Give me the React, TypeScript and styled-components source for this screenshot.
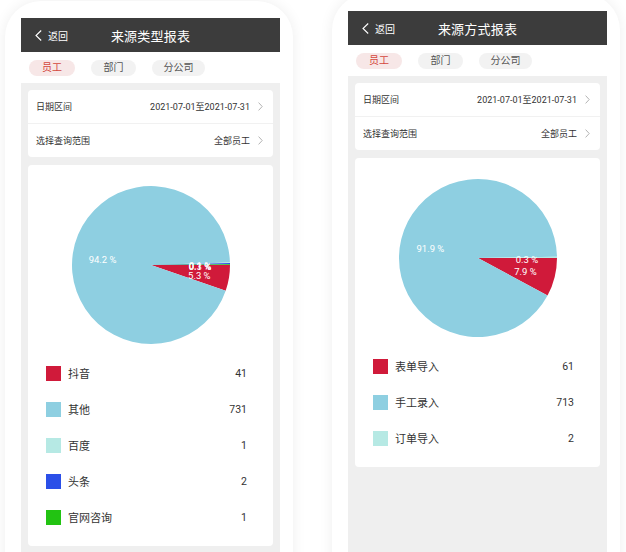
import styled, { createGlobalStyle } from "styled-components";

const GlobalStyle = createGlobalStyle`
  html, body {
    margin: 0;
    padding: 0;
    background: #ffffff;
    overflow: hidden;
  }
  body {
    font-family: Roboto, "Noto Sans CJK SC", sans-serif;
    color: #333333;
  }
`;

const Page = styled.div`
  display: flex;
  align-items: flex-start;
  gap: 39px;
  padding-left: 5px;
  height: 552px;
  overflow: hidden;
`;

const Phone = styled.div<{ $top: number }>`
  width: 259px;
  height: 620px;
  margin-top: ${(p) => p.$top}px;
  padding: 17px 13px 0 16px;
  background: #ffffff;
  border-radius: 36px 36px 0 0;
  box-shadow: 0 0 14px rgba(0, 0, 0, 0.07);
`;

const Screen = styled.div`
  display: flex;
  flex-direction: column;
  height: 100%;
  background: #efefef;
`;

const Header = styled.div`
  display: grid;
  grid-template-columns: 1fr auto 1fr;
  align-items: center;
  height: 34px;
  background: #3c3c3c;
  color: #ffffff;
`;

const Back = styled.div`
  display: flex;
  align-items: center;
  gap: 6px;
  padding-left: 14px;
  font-size: 10px;
`;

const Title = styled.div`
  font-size: 13px;
  letter-spacing: 0.2px;
`;

const Tabs = styled.div`
  display: flex;
  gap: 16px;
  height: 31px;
  padding: 8px 0 0 8px;
  box-sizing: border-box;
  background: #ffffff;
`;

const Tab = styled.div<{ $w: number; $active?: boolean }>`
  width: ${(p) => p.$w}px;
  height: 16px;
  line-height: 16px;
  text-align: center;
  border-radius: 8px;
  font-size: 10px;
  background: ${(p) => (p.$active ? "#f7e7e7" : "#f2f2f2")};
  color: ${(p) => (p.$active ? "#d4473e" : "#555555")};
`;

const Body = styled.div`
  display: flex;
  flex-direction: column;
  gap: 8px;
  padding: 7px;
`;

const Card = styled.div`
  background: #ffffff;
  border-radius: 4px;
`;

const InfoRow = styled.div`
  display: flex;
  align-items: center;
  height: 33px;
  padding: 0 10px 0 8px;
  font-size: 9px;
  color: #333333;
  & + & {
    border-top: 1px solid #f1f1f1;
  }
`;

const InfoValue = styled.span`
  margin-left: auto;
  margin-right: 8px;
`;

const ChartCard = styled(Card)`
  padding: 20px 0 11px;
`;

const PieBox = styled.div`
  display: flex;
  justify-content: center;
  margin-bottom: 10px;
`;

const LegendRow = styled.div`
  display: flex;
  align-items: center;
  height: 36px;
  padding: 0 26px 0 18px;
`;

const Swatch = styled.span<{ $color: string }>`
  width: 15px;
  height: 15px;
  background: ${(p) => p.$color};
`;

const LegendLabel = styled.span`
  margin-left: 7px;
  font-size: 11px;
  color: #333333;
`;

const LegendValue = styled.span`
  margin-left: auto;
  font-size: 10.5px;
  color: #333333;
`;

type Slice = { name: string; value: number; color: string };

const Chevron = ({ color, w, h }: { color: string; w: number; h: number }) => (
  <svg width={w} height={h} viewBox={`0 0 ${w} ${h}`}>
    <polyline
      points={`0.6,0.6 ${w - 0.8},${h / 2} 0.6,${h - 0.6}`}
      fill="none"
      stroke={color}
      strokeWidth="0.9"
    />
  </svg>
);

const BackArrow = () => (
  <svg width="7" height="11" viewBox="0 0 7 11">
    <polyline points="6.2,0.5 1,5.5 6.2,10.5" fill="none" stroke="#ffffff" strokeWidth="1.1" />
  </svg>
);

const Pie = ({ data }: { data: Slice[] }) => {
  const cx = 80;
  const cy = 80;
  const r = 79;
  const total = data.reduce((s, d) => s + d.value, 0);
  let start = 0;
  const parts = data.map((d) => {
    const sweep = (d.value / total) * Math.PI * 2;
    const a0 = start;
    const a1 = start + sweep;
    start = a1;
    const x0 = cx + r * Math.cos(a0);
    const y0 = cy + r * Math.sin(a0);
    const x1 = cx + r * Math.cos(a1);
    const y1 = cy + r * Math.sin(a1);
    const large = sweep > Math.PI ? 1 : 0;
    const mid = (a0 + a1) / 2;
    return {
      ...d,
      path: `M${cx},${cy} L${x0},${y0} A${r},${r} 0 ${large} 1 ${x1},${y1} Z`,
      lx: cx + r * 0.62 * Math.cos(mid),
      ly: cy + r * 0.62 * Math.sin(mid) + 2,
      pct: ((d.value / total) * 100).toFixed(1) + " %",
    };
  });
  return (
    <svg width="160" height="160" viewBox="0 0 160 160">
      {parts.map((p) => (
        <path key={p.name} d={p.path} fill={p.color} />
      ))}
      {parts.map((p) => (
        <text
          key={p.name + "-l"}
          x={p.lx}
          y={p.ly}
          fill="#ffffff"
          fontSize="9.5"
          fontFamily="Roboto, sans-serif"
          textAnchor="middle"
          dominantBaseline="central"
        >
          {p.pct}
        </text>
      ))}
    </svg>
  );
};

const Report = ({ title, data, top }: { title: string; data: Slice[]; top: number }) => (
  <Phone $top={top}>
    <Screen>
      <Header>
        <Back>
          <BackArrow />
          返回
        </Back>
        <Title>{title}</Title>
        <span />
      </Header>
      <Tabs>
        <Tab $w={46} $active>
          员工
        </Tab>
        <Tab $w={45}>部门</Tab>
        <Tab $w={53}>分公司</Tab>
      </Tabs>
      <Body>
        <Card>
          <InfoRow>
            日期区间
            <InfoValue>2021-07-01至2021-07-31</InfoValue>
            <Chevron color="#aaaaaa" w={5} h={9} />
          </InfoRow>
          <InfoRow>
            选择查询范围
            <InfoValue>全部员工</InfoValue>
            <Chevron color="#aaaaaa" w={5} h={9} />
          </InfoRow>
        </Card>
        <ChartCard>
          <PieBox>
            <Pie data={data} />
          </PieBox>
          {data.map((d) => (
            <LegendRow key={d.name}>
              <Swatch $color={d.color} />
              <LegendLabel>{d.name}</LegendLabel>
              <LegendValue>{d.value}</LegendValue>
            </LegendRow>
          ))}
        </ChartCard>
      </Body>
    </Screen>
  </Phone>
);

const typeData: Slice[] = [
  { name: "抖音", value: 41, color: "#d01a3a" },
  { name: "其他", value: 731, color: "#8ecfe1" },
  { name: "百度", value: 1, color: "#b6e9e4" },
  { name: "头条", value: 2, color: "#2b4fe8" },
  { name: "官网咨询", value: 1, color: "#22c312" },
];

const methodData: Slice[] = [
  { name: "表单导入", value: 61, color: "#d01a3a" },
  { name: "手工录入", value: 713, color: "#8ecfe1" },
  { name: "订单导入", value: 2, color: "#b6e9e4" },
];

const App = () => {
  return (
    <>
      <GlobalStyle />
      <Page>
        <Report title="来源类型报表" data={typeData} top={1} />
        <Report title="来源方式报表" data={methodData} top={-6} />
      </Page>
    </>
  );
};

export default App;
